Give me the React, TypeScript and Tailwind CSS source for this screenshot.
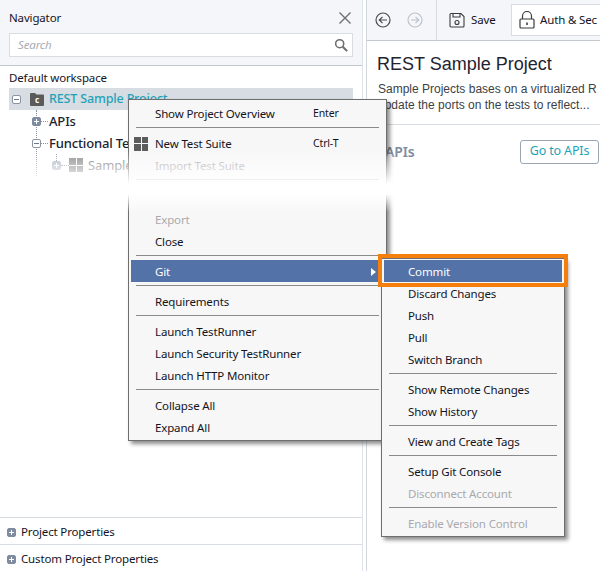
type Entry = { label?: string; hint?: string; off?: boolean; active?: boolean; sep?: boolean; grid?: boolean; arrow?: boolean }

const mainMenu: Entry[] = [
	{ label: 'Show Project Overview', hint: 'Enter' },
	{ sep: true },
	{ label: 'New Test Suite', hint: 'Ctrl-T', grid: true },
	{ label: 'Import Test Suite', off: true },
	{ sep: true },
]

const mainMenuLower: Entry[] = [
	{ label: 'Export', off: true },
	{ label: 'Close' },
	{ sep: true },
	{ label: 'Git', active: true, arrow: true },
	{ sep: true },
	{ label: 'Requirements' },
	{ sep: true },
	{ label: 'Launch TestRunner' },
	{ label: 'Launch Security TestRunner' },
	{ label: 'Launch HTTP Monitor' },
	{ sep: true },
	{ label: 'Collapse All' },
	{ label: 'Expand All' },
]

const gitMenu: Entry[] = [
	{ label: 'Commit', active: true },
	{ label: 'Discard Changes' },
	{ label: 'Push' },
	{ label: 'Pull' },
	{ label: 'Switch Branch' },
	{ sep: true },
	{ label: 'Show Remote Changes' },
	{ label: 'Show History' },
	{ sep: true },
	{ label: 'View and Create Tags' },
	{ sep: true },
	{ label: 'Setup Git Console' },
	{ label: 'Disconnect Account', off: true },
	{ sep: true },
	{ label: 'Enable Version Control', off: true },
]

function SuiteIcon({ className }: { className: string }) {
	return (
		<div className={`grid size-[14px] shrink-0 grid-cols-2 gap-px ${className}`}>
			<span className="bg-current" />
			<span className="bg-current" />
			<span className="bg-current" />
			<span className="bg-current" />
		</div>
	)
}

function Expander({ open, filled, faded }: { open?: boolean; filled?: boolean; faded?: boolean }) {
	const tone = filled ? 'border-[#7f8ba0] bg-[#7f8ba0]' : 'border-[#8b94a5] bg-white'
	const mark = filled ? 'bg-white' : 'bg-[#6f7a8d]'
	return (
		<span className={`relative flex size-[9px] shrink-0 items-center justify-center rounded-[2px] border ${tone} ${faded ? 'opacity-60' : ''}`}>
			<span className={`h-px w-[5px] ${mark}`} />
			{!open && <span className={`absolute h-[5px] w-px ${mark}`} />}
		</span>
	)
}

function MenuRows({ items }: { items: Entry[] }) {
	return (
		<>
			{items.map((item, i) =>
				item.sep ? (
					<div key={i} className="h-2 px-[5px] pt-[3px]">
						<div className="h-px w-full bg-[#8a8a8a]" />
					</div>
				) : (
					<div
						key={i}
						className={`relative flex h-[22px] items-center pt-px pl-[24px] ${item.active ? 'bg-[#5372a8] text-white' : item.off ? 'text-[#a9a9ae]' : 'text-[#14141e]'}`}>
						{item.grid && <SuiteIcon className="absolute left-[3px] text-[#5c5c5c]" />}
						<span>{item.label}</span>
						{item.hint && <span className="absolute left-[182px] text-[10.5px]">{item.hint}</span>}
						{item.arrow && (
							<span className="absolute right-[8px] h-0 w-0 border-y-[4px] border-l-[5px] border-y-transparent border-l-white" />
						)}
					</div>
				),
			)}
		</>
	)
}

export default function App() {
	return (
		<div className="relative flex h-[571px] w-[600px] overflow-hidden bg-white font-['Noto_Sans',sans-serif] text-[11.5px] tracking-[-0.15px] text-[#14141e]">
			{/* navigator */}
			<aside className="flex w-[363px] shrink-0 flex-col border-r border-[#dfe3ea]">
				<div className="h-[66px] shrink-0 border-b border-[#c3c8ce] bg-[#f4f6f9] px-[9px]">
					<div className="flex h-[33px] items-center justify-between pt-[3px]">
						<span>Navigator</span>
						<svg width="12" height="12" viewBox="0 0 12 12" className="mr-[2px] text-[#6e6e6e]" fill="none" stroke="currentColor" strokeWidth="1.4">
							<path d="M.5.5l11 11M11.5.5l-11 11" />
						</svg>
					</div>
					<div className="flex h-[24px] items-center justify-between border border-[#d9dde3] bg-white pr-[4px] pl-2">
						<span className="text-[#a8acb4] italic">Search</span>
						<svg width="14" height="14" viewBox="0 0 16 16" fill="none" stroke="#6d6d6d" strokeWidth="1.8">
							<circle cx="6.5" cy="6.5" r="4.6" />
							<path d="M10 10l5 5" strokeWidth="2.4" />
						</svg>
					</div>
				</div>
				<div className="flex-1 pt-[1px] pl-[9px]">
					<div className="flex h-[21px] items-center">Default workspace</div>
					<div className="flex h-[22px] w-[344px] items-center bg-[#d8dce3]">
						<span className="ml-[3px]">
							<Expander open />
						</span>
						<span className="relative ml-[9px] flex h-[13px] w-[14px] items-center justify-center pt-px text-[8px] font-bold text-white">
							<svg width="14" height="13" viewBox="0 0 14 13" className="absolute inset-0" fill="#5a5a5a">
								<path d="M0 1a1 1 0 0 1 1-1h4l1.5 1.5H13a1 1 0 0 1 1 1V12a1 1 0 0 1-1 1H1a1 1 0 0 1-1-1z" />
							</svg>
							<span className="relative">c</span>
						</span>
						<span className="ml-[5px] pt-px text-[12.5px] font-medium text-[#1fa3b8]">REST Sample Project</span>
					</div>
					<div className="relative">
						<div className="absolute top-0 left-[27px] h-[66px] border-l border-dotted border-[#8b94a5]" />
						<div className="absolute top-[44px] left-[47px] h-[7px] border-l border-dotted border-[#8b94a5]" />
						<div className="flex h-[22px] items-center pl-[23px]">
							<Expander filled />
							<span className="w-[7px] border-t border-dotted border-[#8b94a5]" />
							<span className="ml-px pt-px text-[13px] font-medium text-[#1c2330]">APIs</span>
						</div>
						<div className="flex h-[22px] items-center pl-[23px]">
							<Expander open />
							<span className="w-[7px] border-t border-dotted border-[#8b94a5]" />
							<span className="ml-px pt-px text-[13px] font-medium text-[#1c2330]">Functional Test</span>
						</div>
						<div className="flex h-[22px] items-center pl-[43px]">
							<Expander filled faded />
							<span className="w-[8px] border-t border-dotted border-[#8b94a5]" />
							<SuiteIcon className="text-[#8a8a8a]" />
							<span className="ml-[5px] pt-px text-[13px] text-[#777]">Sample</span>
						</div>
					</div>
				</div>
				<div className="flex h-[27px] shrink-0 items-center gap-[5px] border-t border-[#d8dce3] pt-[2px] pl-[7px]">
					<Expander filled />
					<span>Project Properties</span>
				</div>
				<div className="flex h-[27px] shrink-0 items-center gap-[5px] border-t border-[#d8dce3] pt-[2px] pl-[7px]">
					<Expander filled />
					<span>Custom Project Properties</span>
				</div>
			</aside>

			{/* gutter */}
			<div className="w-[4px] shrink-0 border-r border-[#d3d7de]" />

			{/* overview */}
			<main className="min-w-0 flex-1">
				<div className="flex h-[41px] items-center border-b border-[#c3c8ce] bg-[#f4f6f9] whitespace-nowrap">
					<div className="flex h-full w-[70px] shrink-0 items-center gap-[16px] border-r border-[#d9dde3] pl-[8px]">
						<svg width="16" height="16" viewBox="0 0 16 16" fill="none" stroke="#4a4a4a" strokeWidth="1.2">
							<circle cx="8" cy="8" r="7" />
							<path d="M12 8H4.5M7.5 4.8L4.3 8l3.2 3.2" />
						</svg>
						<svg width="16" height="16" viewBox="0 0 16 16" fill="none" stroke="#bcc3cf" strokeWidth="1.2">
							<circle cx="8" cy="8" r="7" />
							<path d="M4 8h7.5M8.5 4.8L11.7 8l-3.2 3.2" />
						</svg>
					</div>
					<div className="ml-[12px] flex w-[46px] items-center gap-[6px]">
						<svg width="16" height="16" viewBox="0 0 16 16" className="shrink-0" fill="none" stroke="#3c3c3c" strokeWidth="1.1">
							<path d="M1 2.5a1 1 0 0 1 1-1h10l3 3V14a1 1 0 0 1-1 1H2a1 1 0 0 1-1-1z" />
							<path d="M4 1.5v3.5h7V1.5" />
							<circle cx="8" cy="10.5" r="2" />
						</svg>
						<span>Save</span>
					</div>
					<div className="ml-[16px] flex h-[32px] flex-1 items-center gap-[5px] border border-r-0 border-[#d9dde3] bg-white pl-[7px] text-[11.5px]">
						<svg width="16" height="18" viewBox="0 0 16 18" className="shrink-0" fill="none" stroke="#3c3c3c" strokeWidth="1.2">
							<path d="M3.5 8V5a4.5 4.5 0 0 1 9 0v3" />
							<rect x="1" y="8" width="14" height="9" rx="1" />
							<path d="M8 11.5v2.5" strokeWidth="1.6" />
						</svg>
						<span>Auth & Sec</span>
					</div>
				</div>
				<div className="pl-[10px] font-['Liberation_Sans',sans-serif] tracking-normal whitespace-nowrap">
					<h1 className="mt-[12px] text-[18px] leading-[22px] text-[#1f2430]">REST Sample Project</h1>
					<p className="mt-[6px] ml-px text-[12px] leading-[16px] text-[#3c3f46]">Sample Projects bases on a virtualized R</p>
					<p className="ml-px text-[12px] leading-[16px] text-[#3c3f46]">update the ports on the tests to reflect...</p>
				</div>
				<div className="mt-[11px] flex h-[54px] items-center justify-between border-t border-[#d8dce3] pr-[1px] pl-[18px]">
					<span className="text-[14px] font-semibold text-[#7f8ba0]">APIs</span>
					<span className="flex h-[24px] w-[79px] items-center justify-center rounded-[3px] border border-[#9aa5b5] text-[12.5px] text-[#1fa3b8]">Go to APIs</span>
				</div>
			</main>

			{/* context menu, with the cut-out middle of the screenshot */}
			<div className="absolute top-[99px] left-[128px] flex h-[342px] w-[259px] flex-col border border-[#6e6e6e] bg-[#f7f7f7] px-[2px] py-[2px] shadow-[3px_3px_4px_rgba(0,0,0,0.45)]">
				<MenuRows items={mainMenu} />
				<div className="h-[24px]" />
				<MenuRows items={mainMenuLower} />
			</div>
			<div className="absolute top-[150px] left-0 h-[34px] w-[395px] bg-gradient-to-b from-transparent to-white" />
			<div className="absolute top-[184px] left-0 h-[10px] w-[395px] bg-white" />
			<div className="absolute top-[194px] left-[120px] h-[18px] w-[275px] bg-gradient-to-b from-white to-transparent" />

			{/* git submenu */}
			<div className="absolute top-[258px] left-[381px] flex h-[279px] w-[184px] flex-col border border-[#6e6e6e] bg-[#f7f7f7] px-[2px] py-px shadow-[3px_3px_4px_rgba(0,0,0,0.45)]">
				<MenuRows items={gitMenu} />
			</div>
			<div className="absolute top-[254px] left-[378px] h-[33px] w-[190px] border-4 border-[#f57f0c]" />
		</div>
	)
}
